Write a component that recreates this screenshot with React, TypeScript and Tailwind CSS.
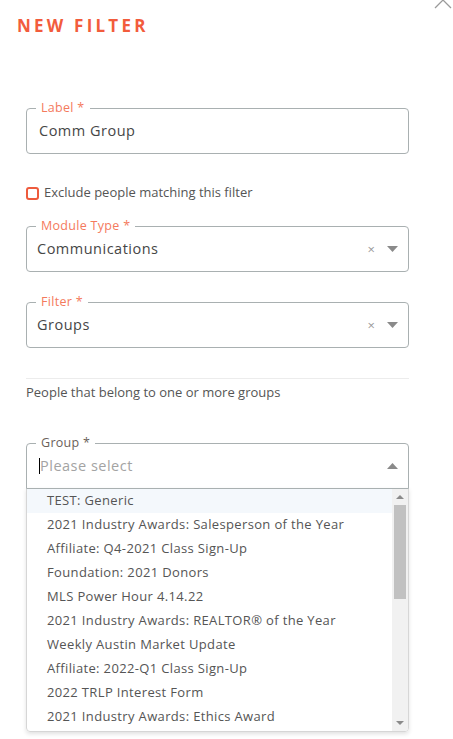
import React from "react";

const groups = [
  "TEST: Generic",
  "2021 Industry Awards: Salesperson of the Year",
  "Affiliate: Q4-2021 Class Sign-Up",
  "Foundation: 2021 Donors",
  "MLS Power Hour 4.14.22",
  "2021 Industry Awards: REALTOR® of the Year",
  "Weekly Austin Market Update",
  "Affiliate: 2022-Q1 Class Sign-Up",
  "2022 TRLP Interest Form",
  "2021 Industry Awards: Ethics Award",
];

function Caret({ up = false, size = 11 }: { up?: boolean; size?: number }) {
  const h = Math.round(size / 2);
  return (
    <svg width={size} height={h} viewBox={`0 0 ${size} ${h}`} className="shrink-0">
      <path
        d={up ? `M0 ${h} L${size / 2} 0 L${size} ${h} Z` : `M0 0 L${size} 0 L${size / 2} ${h} Z`}
        fill="#8a8a8a"
      />
    </svg>
  );
}

function Outlined({
  label,
  labelClass = "text-[#f47a5d]",
  children,
  className = "",
}: {
  label: string;
  labelClass?: string;
  children: React.ReactNode;
  className?: string;
}) {
  return (
    <div className={"relative h-[46px] border border-[#a9b0b1] rounded-[4px] flex items-center " + className}>
      <span className={"absolute -top-[8px] left-[9px] px-[5px] bg-white text-[12.5px] leading-[14px] tracking-[0.3px] " + labelClass}>
        {label}
      </span>
      {children}
    </div>
  );
}

function SelectField({ label, value, className = "" }: { label: string; value: string; className?: string }) {
  return (
    <Outlined label={label} className={"pl-[10px] pr-[10px] " + className}>
      <span className="flex-1 text-[14.5px] tracking-[0.5px] text-[#464646]">{value}</span>
      <span className="text-[13px] text-[#9a9a9a] mr-[12px] leading-none">×</span>
      <Caret />
    </Outlined>
  );
}

export default function App() {
  return (
    <div className="relative w-[453px] h-[739px] overflow-hidden bg-white font-['Open_Sans',sans-serif]">
      {/* close */}
      <svg className="absolute right-[1px] -top-[9px]" width="18" height="18" viewBox="0 0 18 18">
        <path d="M1 1 L17 17 M17 1 L1 17" stroke="#9a9a9a" strokeWidth="1.3" />
      </svg>

      <h1 className="ml-[17px] pt-[16px] text-[17px] leading-[20px] font-bold tracking-[0.19em] text-[#f25c3c]">
        NEW FILTER
      </h1>

      <div className="pl-[26px] w-[409px] flex flex-col">
        <Outlined label="Label *" className="mt-[72px] pl-[12px]">
          <span className="text-[14.5px] tracking-[0.5px] text-[#464646]">Comm Group</span>
        </Outlined>

        <label className="mt-[32px] h-[14px] flex items-center gap-[5px]">
          <span className="w-[13px] h-[13px] border-2 border-[#ee5b3d] rounded-[3px]" />
          <span className="text-[13px] text-[#555]">Exclude people matching this filter</span>
        </label>

        <SelectField className="mt-[26px]" label="Module Type *" value="Communications" />
        <SelectField className="mt-[30px]" label="Filter *" value="Groups" />

        <div className="mt-[30px] border-t border-[#ececec]" />
        <p className="mt-[4px] text-[13px] leading-[18px] text-[#555]">People that belong to one or more groups</p>

        <Outlined
          label="Group *"
          labelClass="text-[#6b5f5a]"
          className="mt-[42px] pl-[12px] pr-[10px] rounded-b-none"
        >
          <span className="w-px h-[16px] bg-black" />
          <span className="flex-1 text-[14.5px] tracking-[0.5px] text-[#a3a3a3]">Please select</span>
          <Caret up />
        </Outlined>

        <div className="h-[244px] -mt-px border border-[#d6d6d6] rounded-b-[4px] shadow-[0_2px_4px_rgba(0,0,0,0.12)] flex overflow-hidden">
          <ul className="flex-1">
            {groups.map((g, i) => (
              <li
                key={g}
                className={
                  "h-[24px] pl-[20px] flex items-center text-[13px] tracking-[0.35px] text-[#555] whitespace-nowrap " +
                  (i === 0 ? "bg-[#f4f8fc]" : "")
                }
              >
                {g}
              </li>
            ))}
          </ul>
          <div className="w-[16px] bg-[#f1f1f1] flex flex-col items-center">
            <div className="h-[16px] flex items-center justify-center">
              <Caret up size={8} />
            </div>
            <div className="w-[12px] h-[94px] bg-[#c1c1c1]" />
            <div className="flex-1" />
            <div className="h-[16px] flex items-center justify-center">
              <Caret size={8} />
            </div>
          </div>
        </div>
      </div>
    </div>
  );
}
